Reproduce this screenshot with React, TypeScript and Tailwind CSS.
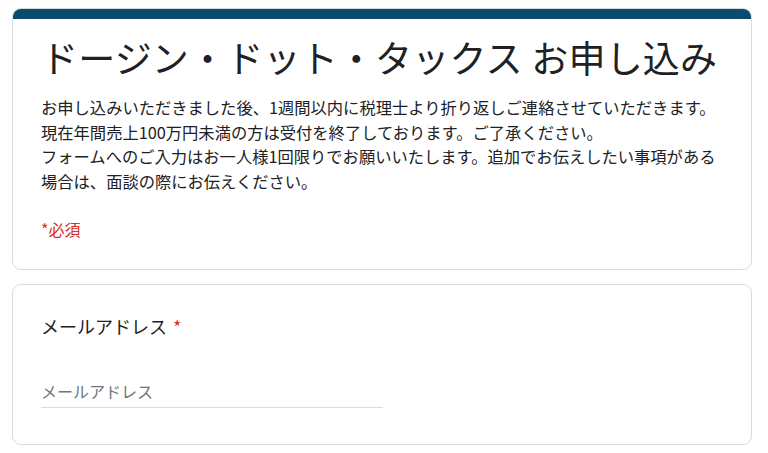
import React from "react";

const jp = "font-['Noto_Sans_CJK_JP','Noto_Sans',sans-serif]";

const lines = [
  "お申し込みいただきました後、1週間以内に税理士より折り返しご連絡させていただきます。",
  "現在年間売上100万円未満の方は受付を終了しております。ご了承ください。",
  "フォームへのご入力はお一人様1回限りでお願いいたします。追加でお伝えしたい事項がある",
  "場合は、面談の際にお伝えください。",
];

export default function App() {
  return (
    <main className={`min-h-[453px] w-[768px] bg-white pt-[8px] pl-[12px] text-[#202124] ${jp}`}>
      <section className="w-[740px] overflow-hidden rounded-[9px] border border-[#dadce0] bg-white">
        <div className="h-[10px] bg-[#0b4b6e]" />
        <div className="px-[28px] pt-[16px] pb-[28px]">
          <h1 className="text-[37px] leading-[44px] tracking-[0.2px] whitespace-nowrap">
            ドージン・ドット・タックス お申し込み
          </h1>
          <div className="mt-[16px] text-[16.3px] leading-[24.5px]">
            {lines.map((line) => (
              <p key={line} className="whitespace-nowrap">
                {line}
              </p>
            ))}
          </div>
          <p className="mt-[24px] text-[16px] leading-[24px] text-[#d93025]">*必須</p>
        </div>
      </section>

      <section className="mt-[14px] w-[740px] rounded-[9px] border border-[#dadce0] bg-white px-[28px] pt-[29px] pb-[36px]">
        <label className="flex items-center text-[18px] leading-[24px]">
          メールアドレス
          <span className="ml-[6px] text-[#d93025]">*</span>
        </label>
        <div className="mt-[36px] w-[342px] border-b border-[#dadce0]">
          <input
            type="text"
            placeholder="メールアドレス"
            className={`block h-[33px] w-full bg-transparent text-[16px] text-[#202124] placeholder:text-[#70757a] outline-none ${jp}`}
          />
        </div>
      </section>
    </main>
  );
}
